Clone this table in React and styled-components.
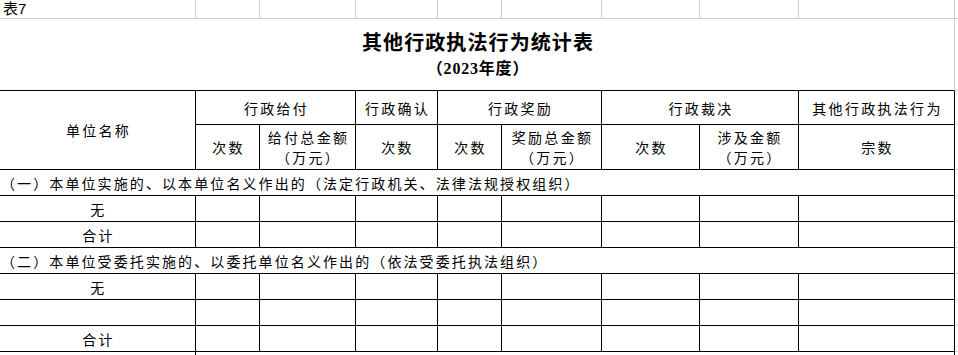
import React, { Fragment } from 'react'
import styled, { createGlobalStyle } from 'styled-components'

const GlobalStyle = createGlobalStyle`
    body {
        margin: 0;
        background: #fff;
        color: #000;
        font-family: "Noto Sans CJK SC", "Noto Sans", sans-serif;
    }
`

const lineColor = {
    grid: '#c9ced9',
    ink: '#000',
    none: 'transparent',
}

const colWidths = [196, 64, 96, 82, 64, 100, 98, 99, 156, 100]
const rowHeights = [19, 72, 34, 45, 26, 26, 26, 26, 26, 26, 26, 26, 26]

const Sheet = styled.div`
    display: grid;
    grid-template-columns: ${colWidths.map(w => w + 'px').join(' ')};
    grid-template-rows: ${rowHeights.map(h => h + 'px').join(' ')};
    width: max-content;
`

const Cell = styled.div`
    box-sizing: border-box;
    display: flex;
    flex-direction: column;
    align-items: center;
    justify-content: center;
    grid-column: span ${p => p.$span || 1};
    grid-row: span ${p => p.$rows || 1};
    border-right: 1px solid ${p => lineColor[p.$r || 'ink']};
    border-bottom: 1px solid ${p => lineColor[p.$b || 'ink']};
    padding-left: 2px;
    font-size: 14px;
    line-height: 20px;
    letter-spacing: 2.3px;
    white-space: nowrap;
    overflow: hidden;
`

const NoteCell = styled(Cell)`
    align-items: flex-start;
    padding-left: 3px;
    font-family: "Liberation Sans", "Noto Sans CJK SC", sans-serif;
    font-size: 15px;
    letter-spacing: 0;
`

const SectionCell = styled(Cell)`
    align-items: flex-start;
    padding-left: 1px;
    letter-spacing: 2.1px;
`

const TitleCell = styled(Cell)`
    justify-content: flex-start;
    padding-top: 11px;
    letter-spacing: 0;
`

const Title = styled.div`
    font-size: 20px;
    line-height: 24px;
    font-weight: bold;
    letter-spacing: 1.1px;
`

const Subtitle = styled.div`
    margin-top: 6px;
    font-family: "Liberation Serif", "Noto Sans CJK SC", serif;
    font-size: 16px;
    line-height: 18px;
    font-weight: bold;
    letter-spacing: 0.8px;
`

const topHeads = [
    { text: '行政给付', span: 2 },
    { text: '行政确认', span: 1 },
    { text: '行政奖励', span: 2 },
    { text: '行政裁决', span: 2 },
    { text: '其他行政执法行为', span: 1 },
]

const subHeads = [
    ['次数'],
    ['给付总金额', '（万元）'],
    ['次数'],
    ['次数'],
    ['奖励总金额', '（万元）'],
    ['次数'],
    ['涉及金额', '（万元）'],
    ['宗数'],
]

const sections = [
    {
        title: '（一）本单位实施的、以本单位名义作出的（法定行政机关、法律法规授权组织）',
        rows: ['无', '合计'],
    },
    {
        title: '（二）本单位受委托实施的、以委托单位名义作出的（依法受委托执法组织）',
        rows: ['无', '', '合计'],
    },
]

const blanks = Array.from({ length: 8 })

const GridEnd = () => <Cell $r="grid" $b="grid" />

export default function App() {
    return (
        <Fragment>
            <GlobalStyle />
            <Sheet>
                <NoteCell $r="grid" $b="grid">表7</NoteCell>
                {colWidths.slice(1).map((_, i) => <Cell key={i} $r="grid" $b="grid" />)}

                <TitleCell $span={9} $r="grid">
                    <Title>其他行政执法行为统计表</Title>
                    <Subtitle>（2023年度）</Subtitle>
                </TitleCell>
                <GridEnd />

                <Cell $rows={2}>单位名称</Cell>
                {topHeads.map(h => <Cell key={h.text} $span={h.span}>{h.text}</Cell>)}
                <GridEnd />
                {subHeads.map((lines, i) => (
                    <Cell key={i}>
                        {lines.map((l, j) => <div key={j}>{l}</div>)}
                    </Cell>
                ))}
                <GridEnd />

                {sections.map(sec => (
                    <Fragment key={sec.title}>
                        <SectionCell $span={9}>{sec.title}</SectionCell>
                        <GridEnd />
                        {sec.rows.map((label, i) => (
                            <Fragment key={i}>
                                <Cell>{label}</Cell>
                                {blanks.map((_, j) => <Cell key={j} />)}
                                <GridEnd />
                            </Fragment>
                        ))}
                    </Fragment>
                ))}

                <Cell $b="none" />
                <Cell $span={7} $r="none" $b="none" />
                <Cell $b="none" />
                <GridEnd />
            </Sheet>
        </Fragment>
    )
}
